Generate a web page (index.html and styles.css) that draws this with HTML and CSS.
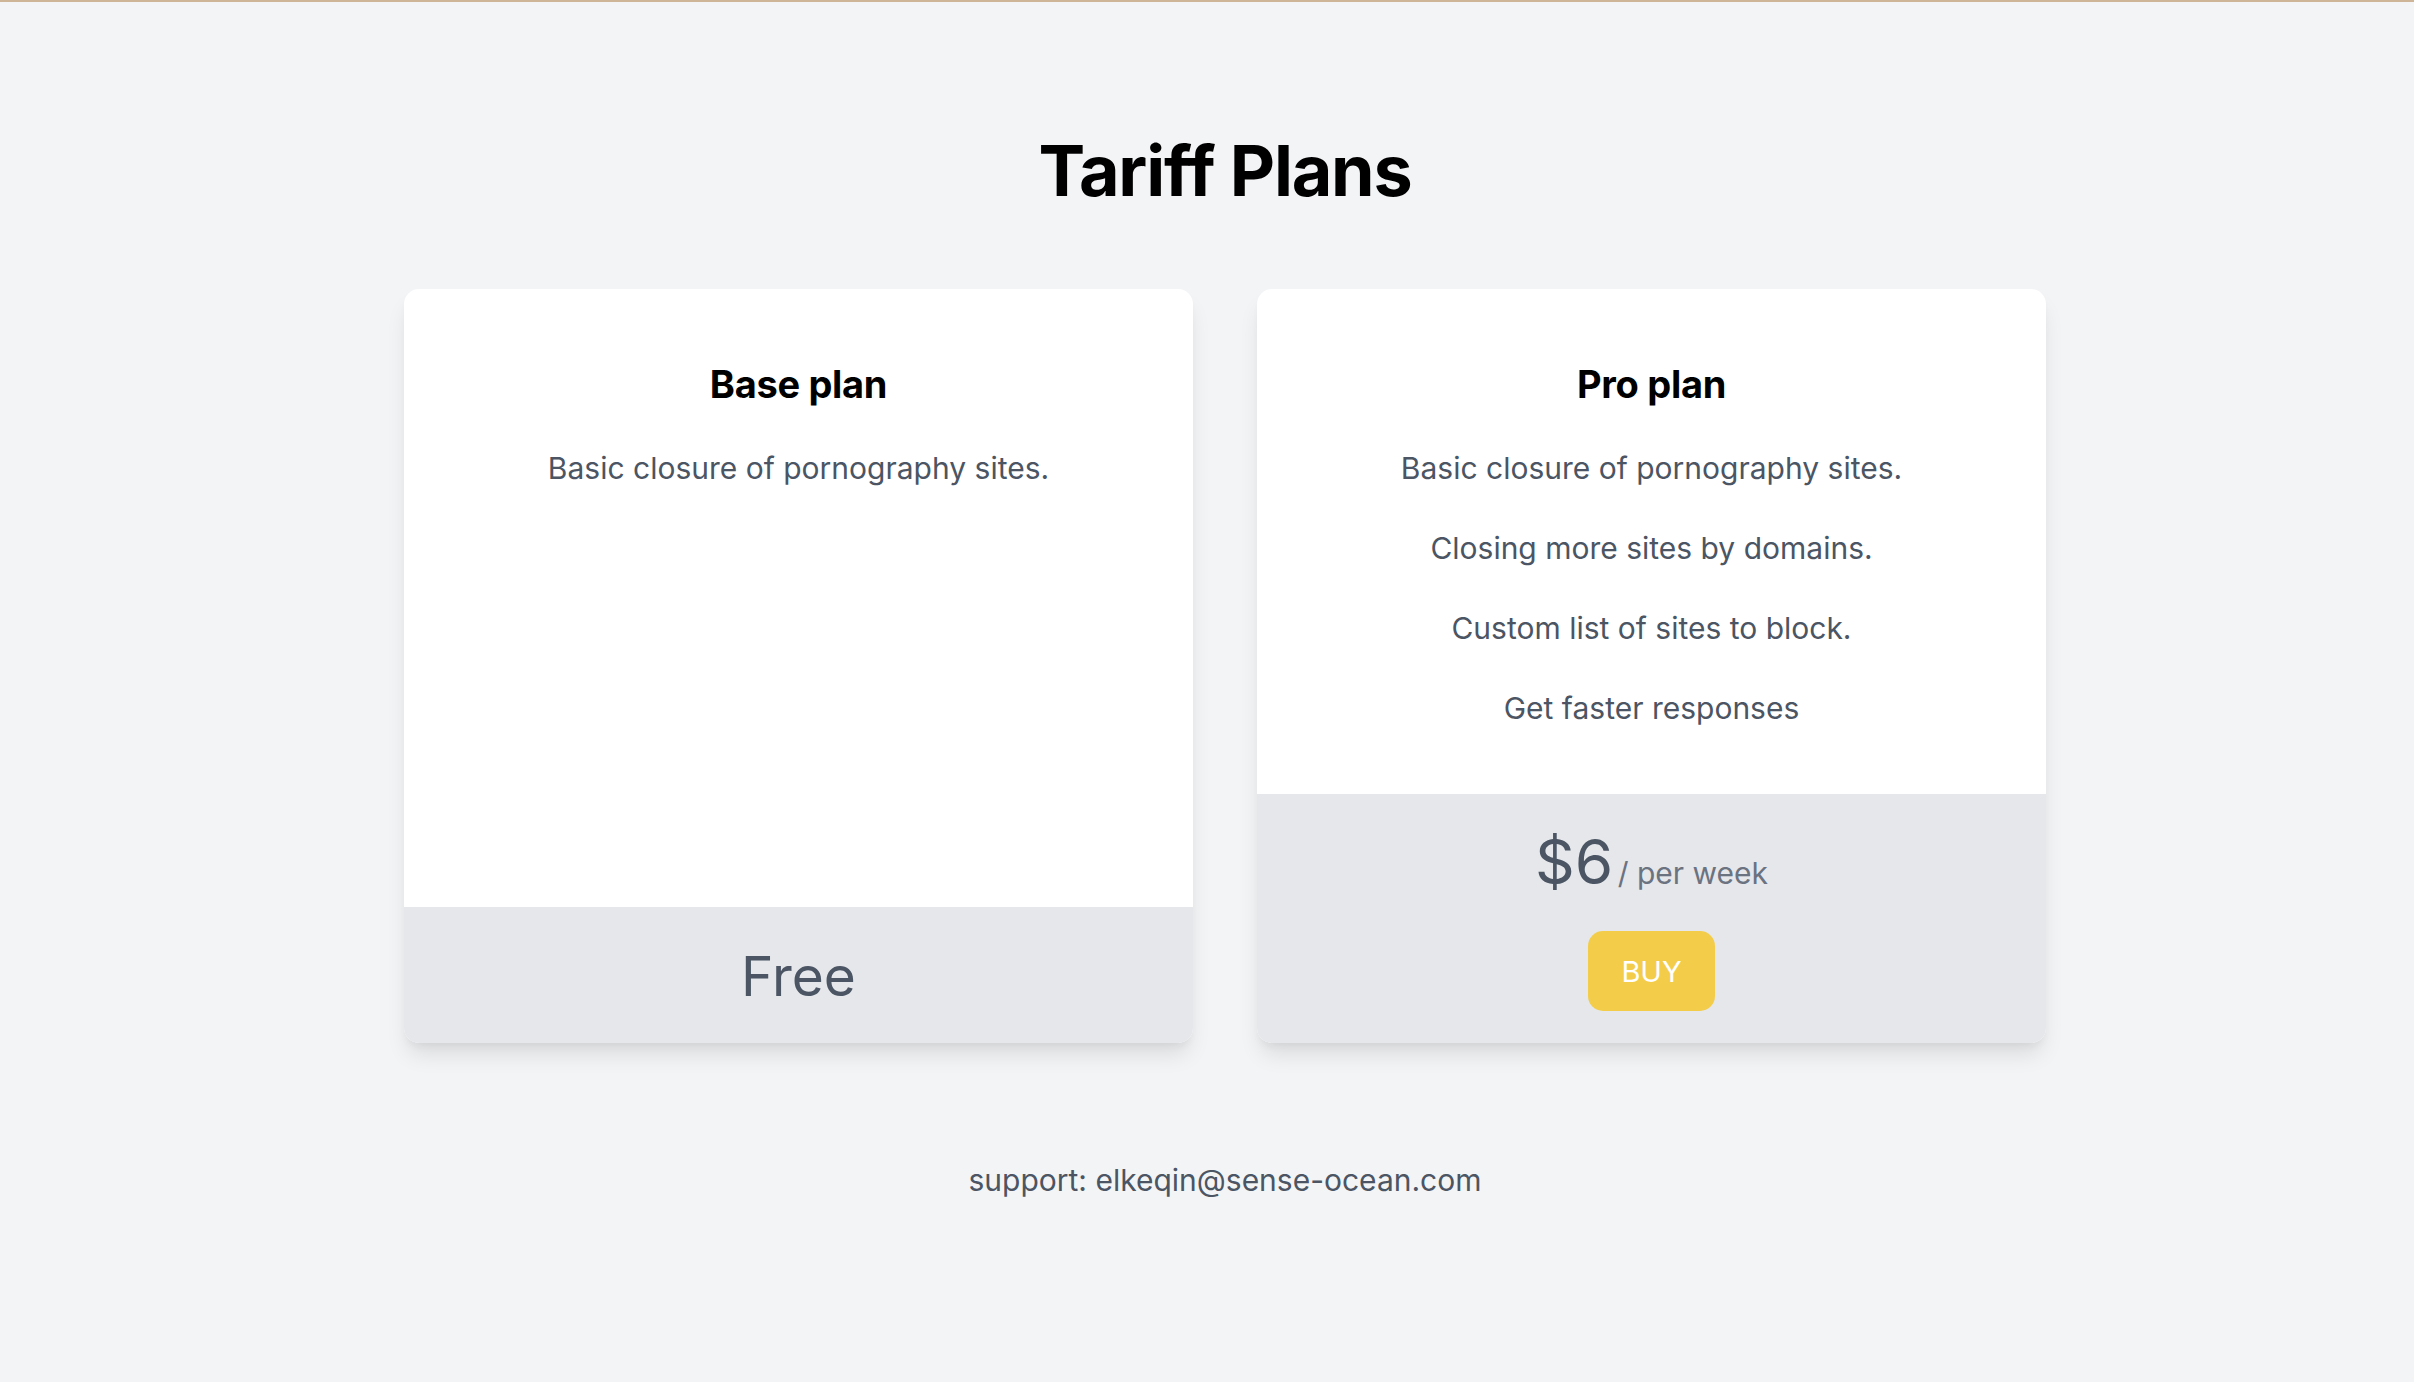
FILE: index.html
```html
<!DOCTYPE html>
<html lang="en">
<head>
  <meta charset="UTF-8">
  <title>Tariff Plans</title>
  <link rel="stylesheet" href="styles.css">
</head>
<body>
  <div class="page">
    <h1 class="title">Tariff Plans</h1>

    <div class="plans">
      <div class="plan">
        <div class="plan-body">
          <h2 class="plan-name">Base plan</h2>
          <p>Basic closure of pornography sites.</p>
        </div>
        <div class="plan-footer free">
          <span class="free-label">Free</span>
        </div>
      </div>

      <div class="plan">
        <div class="plan-body">
          <h2 class="plan-name">Pro plan</h2>
          <p>Basic closure of pornography sites.</p>
          <p>Closing more sites by domains.</p>
          <p>Custom list of sites to block.</p>
          <p>Get faster responses</p>
        </div>
        <div class="plan-footer paid">
          <div class="price"><span class="amount">$6</span> <span class="period">/ per week</span></div>
          <button class="buy-btn">BUY</button>
        </div>
      </div>
    </div>

    <p class="support">support: elkeqin@sense-ocean.com</p>
  </div>
</body>
</html>
```

FILE: styles.css
```css
html, body {
  margin: 0;
  padding: 0;
}
body {
  font-family: Inter, "Noto Sans", sans-serif;
  background-color: #f3f4f6;
  border-top: 2px solid #cfb597;
  min-height: 1380px;
  color: #4b5563;
}
.page {
  padding-left: 36px;
  display: flex;
  flex-direction: column;
  align-items: center;
}
.title {
  margin: 133px 0 0;
  font-size: 70px;
  line-height: 72px;
  font-weight: 700;
  color: #000;
  letter-spacing: -1.2px;
}
.plans {
  margin-top: 82px;
  display: grid;
  grid-template-columns: 789px 789px;
  gap: 64px;
}
.plan {
  display: flex;
  flex-direction: column;
  background: #fff;
  border-radius: 15px;
  overflow: hidden;
  box-shadow: 0 15px 22px -4px rgba(0, 0, 0, 0.1), 0 6px 9px -3px rgba(0, 0, 0, 0.05);
}
.plan-body {
  flex: 1;
  padding: 76px 20px 66px;
  text-align: center;
  display: flex;
  flex-direction: column;
  gap: 40px;
}
.plan-name {
  margin: 0 0 5px;
  font-size: 38px;
  line-height: 38px;
  font-weight: 700;
  color: #000;
  letter-spacing: -0.3px;
}
.plan-body p {
  margin: 0;
  font-size: 30px;
  line-height: 40px;
}
.plan-footer {
  background: #e5e7eb;
  text-align: center;
}
.plan-footer.free {
  padding: 41px 0 39px;
}
.free-label {
  display: block;
  font-size: 55px;
  line-height: 56px;
}
.plan-footer.paid {
  padding: 36px 0 32px;
  display: flex;
  flex-direction: column;
  align-items: center;
  gap: 21px;
}
.price {
  line-height: 64px;
}
.amount {
  font-size: 62px;
  color: #4b5563;
}
.period {
  font-size: 30px;
  color: #6b7280;
}
.buy-btn {
  width: 127px;
  height: 80px;
  border: none;
  border-radius: 15px;
  background: #f3cd4a;
  color: #fff;
  font-family: inherit;
  font-size: 29px;
  cursor: pointer;
}
.support {
  margin: 117px 0 0;
  font-size: 30px;
  line-height: 40px;
}
```
